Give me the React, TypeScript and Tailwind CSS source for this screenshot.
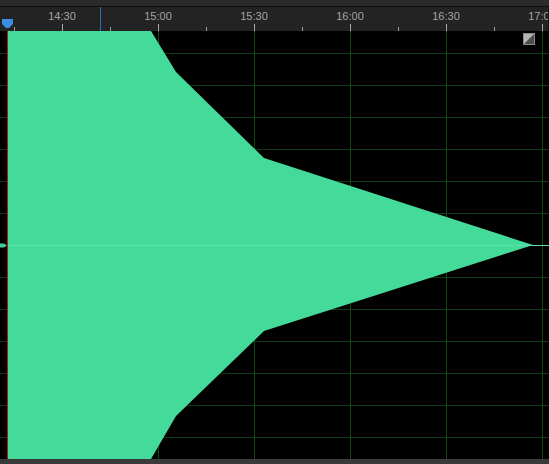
const labels = ["14:30", "15:00", "15:30", "16:00", "16:30", "17:00"];

const hLines = [22, 54, 86, 118, 150, 182, 246, 278, 310, 342, 374, 406];
const vLines = [62, 158, 254, 350, 446, 542];

function Ruler() {
  return (
    <div className="relative h-[24px] bg-[#232323] overflow-hidden border-r border-[#141414]">
      {/* playhead marker */}
      <div className="absolute left-[100px] top-0 h-full w-px bg-[#2f6db0]" />
      <svg className="absolute left-[2px] top-[12px]" width="11" height="10" viewBox="0 0 11 10">
        <path d="M0 0H11V5L7 9H4L0 5Z" fill="#3b8de6" />
      </svg>
      <div className="flex h-full pl-[14px]">
        {labels.map((label) => (
          <div key={label} className="relative h-full w-[96px] shrink-0">
            <div className="absolute left-0 bottom-0 h-[4px] w-px bg-[#9c9c9c]" />
            <div className="absolute left-[48px] bottom-0 h-[7px] w-px bg-[#a8a8a8]" />
            <span className="absolute left-[48px] top-[3px] -translate-x-1/2 text-[11px] leading-[13px] text-[#a3a3a3] font-['Liberation_Sans',Arial,sans-serif] whitespace-nowrap">
              {label}
            </span>
          </div>
        ))}
      </div>
    </div>
  );
}

function Waveform() {
  return (
    <div className="relative h-[428px] bg-black overflow-hidden">
      <svg width="549" height="428" viewBox="0 0 549 428" className="block">
        {hLines.map((y) => (
          <line key={y} x1="0" x2="549" y1={y + 0.5} y2={y + 0.5} stroke="#103a12" strokeWidth="1" />
        ))}
        {vLines.map((x) => (
          <line key={x} x1={x + 0.5} x2={x + 0.5} y1="0" y2="428" stroke="#0f4a12" strokeWidth="1" />
        ))}
        <polygon
          points="8,0 151,0 176,41 264,127 533,214 264,300 176,385 151,428 8,428"
          fill="#44da99"
        />
        <line x1="8" x2="549" y1="214.5" y2="214.5" stroke="#5fe0a9" strokeWidth="1" />
        <path d="M0 212.5H4L7 214.5L4 216.5H0Z" fill="#3fcf90" />
        <line x1="7.5" x2="7.5" y1="0" y2="428" stroke="#b3161b" strokeWidth="1" />
      </svg>
      {/* zoom toggle */}
      <div className="absolute left-[523px] top-[2px] h-[12px] w-[12px] border border-[#8a8a8a] bg-[#b4b4b4]">
        <svg width="10" height="10" viewBox="0 0 10 10" className="block">
          <path d="M10 0V10H0Z" fill="#4d4d4d" />
        </svg>
      </div>
    </div>
  );
}

export default function App() {
  return (
    <div className="w-[549px] h-[464px] bg-[#2a2a2a] flex flex-col overflow-hidden font-['Liberation_Sans',Arial,sans-serif]">
      <div className="h-[6px] bg-[#2a2a2a]" />
      <div className="h-px bg-[#0f0f0f]" />
      <Ruler />
      <Waveform />
      <div className="flex-1 bg-[#3a3a3a]" />
    </div>
  );
}
